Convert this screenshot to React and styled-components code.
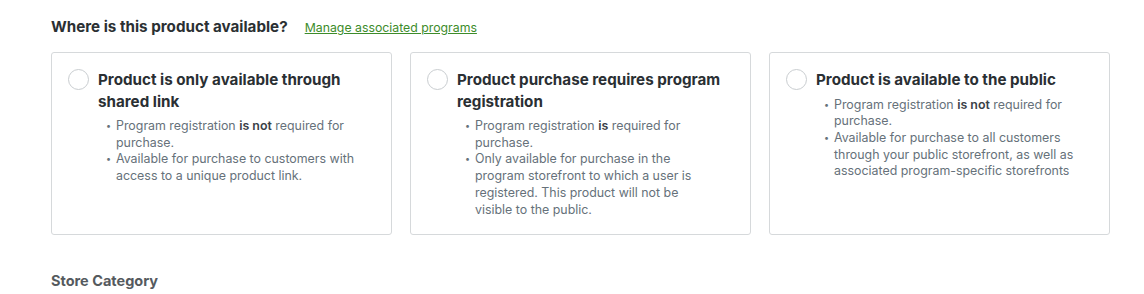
import React from 'react';
import styled, { createGlobalStyle } from "styled-components";

const GlobalStyle = createGlobalStyle`
    body {
        margin: 0;
        background: #ffffff;
        font-family: "Inter", "Noto Sans", sans-serif;
    }
`;

const Page = styled.div`
    padding: 17px 34px 0 51px;
`;
const HeaderRow = styled.div`
    display: flex;
    align-items: baseline;
    gap: 17px;
    height: 24px;
`;
const Title = styled.h3`
    margin: 0;
    font-size: 15.2px;
    font-weight: 700;
    color: #2b3033;
`;
const ManageLink = styled.a`
    font-size: 12.3px;
    color: #3d8c2a;
    text-decoration: underline;
    cursor: pointer;
`;
const Cards = styled.div`
    display: grid;
    grid-template-columns: repeat(3, 341px);
    gap: 18px;
    margin-top: 11px;
`;
const Card = styled.label`
    display: flex;
    gap: 9px;
    height: 183px;
    box-sizing: border-box;
    padding: 16px 16px;
    border: 1px solid #d6d9db;
    border-radius: 3px;
    cursor: pointer;
`;
const Radio = styled.span`
    flex: 0 0 auto;
    width: 21px;
    height: 21px;
    border-radius: 50%;
    border: 1px solid #c9cdd0;
    box-sizing: border-box;
`;
const Body = styled.div`
    display: flex;
    flex-direction: column;
`;
const CardTitle = styled.div`
    font-size: 15.2px;
    font-weight: 700;
    line-height: 21.5px;
    color: #2a2f33;
`;
const List = styled.ul`
    margin: 6px 0 0;
    padding: 0 18px 0 18px;
    list-style: none;
    font-size: 12.4px;
    line-height: 16.7px;
    color: #66717a;
`;
const Item = styled.li`
    position: relative;
    &::before {
        content: "•";
        position: absolute;
        left: -10px;
        font-size: 9px;
    }
`;
const Strong = styled.b`
    font-weight: 600;
    color: #3a4147;
`;
const Section = styled.h4`
    margin: 37px 0 0;
    font-size: 14.5px;
    font-weight: 700;
    color: #555a5e;
`;

const options = [
    {
        title: "Product is only available through shared link",
        items: [
            <>Program registration <Strong>is not</Strong> required for purchase.</>,
            "Available for purchase to customers with access to a unique product link.",
        ],
    },
    {
        title: "Product purchase requires program registration",
        items: [
            <>Program registration <Strong>is</Strong> required for purchase.</>,
            "Only available for purchase in the program storefront to which a user is registered. This product will not be visible to the public.",
        ],
    },
    {
        title: "Product is available to the public",
        items: [
            <>Program registration <Strong>is not</Strong> required for purchase.</>,
            "Available for purchase to all customers through your public storefront, as well as associated program-specific storefronts",
        ],
    },
];

export default function App() {
    return (
        <Page>
            <GlobalStyle />
            <HeaderRow>
                <Title>Where is this product available?</Title>
                <ManageLink>Manage associated programs</ManageLink>
            </HeaderRow>
            <Cards>
                {options.map((o) => (
                    <Card key={o.title}>
                        <Radio />
                        <Body>
                            <CardTitle>{o.title}</CardTitle>
                            <List>
                                {o.items.map((it, i) => <Item key={i}>{it}</Item>)}
                            </List>
                        </Body>
                    </Card>
                ))}
            </Cards>
            <Section>Store Category</Section>
        </Page>
    );
}
